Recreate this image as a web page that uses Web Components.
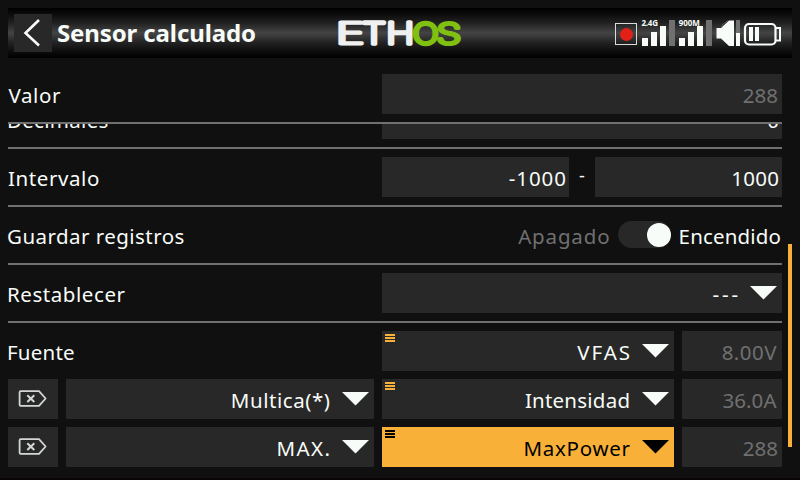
<!DOCTYPE html>
<html lang="es"><head><meta charset="utf-8"><title>Sensor calculado</title>
<style>
html,body{margin:0;background:#101010}
body{width:800px;height:480px;overflow:hidden;font-family:"Noto Sans",sans-serif;font-size:20.5px;color:#f8fcf8}
</style></head><body>
<ethos-screen></ethos-screen>
<script>
const ctx = document.createElement('canvas').getContext('2d');
function define(name, html, after) {
  const t = document.createElement('template');
  t.innerHTML = html;
  customElements.define(name, class extends HTMLElement {
    constructor() { super(); this.attachShadow({mode:'open'}).append(t.content.cloneNode(true)); }
    connectedCallback() { if (after) after(this); }
  });
}

/* Text tracked so that its ink spans the given width */
define('ui-text', `<style>:host{display:block;white-space:pre;line-height:40px;flex:none}</style><slot></slot>`, el => {
  const s = getComputedStyle(el), str = el.textContent;
  ctx.font = `${s.fontWeight} ${s.fontSize} ${s.fontFamily}`;
  const m = ctx.measureText(str), ink = m.actualBoundingBoxRight + m.actualBoundingBoxLeft;
  const ls = str.length > 1 ? (el.getAttribute('w') - ink) / (str.length - 1) : 0;
  el.style.letterSpacing = ls.toFixed(3) + 'px';
  el.style.marginRight = (-ls).toFixed(3) + 'px';
});

define('ui-field', `<style>
:host{display:flex;box-sizing:border-box;height:40px;padding:1px 3px 0 0;background:#282828;justify-content:flex-end;overflow:hidden}
:host([muted]){color:#707070;padding-right:4px}
:host([unit]){padding-right:5.5px}
</style><slot></slot>`);

define('ui-select', `<style>
:host{display:flex;position:relative;box-sizing:border-box;height:40px;padding:0 5px 0 0;background:#282828;justify-content:flex-end;gap:12px;--mark:#f8b038}
:host([active]){background:#f8b038;color:#000;--mark:#000}
.t{padding-top:1px}
.arrow{flex:none;margin-top:13px}
.mark{display:none;position:absolute;left:3px;top:3px}
:host([menu]) .mark{display:block}
</style>
<svg class="mark" width="10" height="8" fill="var(--mark)"><rect width="10" height="2"/><rect y="3" width="10" height="2"/><rect y="6" width="10" height="2"/></svg>
<div class="t"><slot></slot></div>
<svg class="arrow" width="27" height="14" fill="currentColor"><path d="M0 0H27L13.5 13.5Z"/></svg>`);

define('ui-delete', `<style>:host{display:flex;height:40px;background:#282828;align-items:center;justify-content:center}svg{margin:0 2px 1px 0}</style>
<svg width="29" height="17" viewBox="0 0 29 17" fill="none" stroke="#d4d8d4"><path stroke-width="1.8" stroke-linejoin="round" d="M2.7 1.2H21L27.6 8.5L21 15.8H2.7Q1.6 15.8 1.6 14.7V2.3Q1.6 1.2 2.7 1.2Z"/><path stroke-width="2" d="M9.3 5.2L16.3 12M16.3 5.2L9.3 12"/></svg>`);

define('ui-switch', `<style>:host{display:flow-root;width:53px;height:27px;border-radius:14px;background:#282828}
i{display:block;width:24px;height:24px;margin:2px 0 0 29px;border-radius:50%;background:#f8fcf8}</style><i></i>`);

define('ui-row', `<style>
:host{display:grid;grid-template-columns:374px 400px;box-sizing:border-box;height:58px;padding-top:8px;border-bottom:2px solid #707070}
.l{padding-top:1px;margin-left:var(--nudge,-1px)}
.c{display:flex;min-width:0}
</style><div class="l"><slot name="label"></slot></div><div class="c"><slot></slot></div>`);

define('ui-header', `<style>
:host{display:flex;box-sizing:border-box;height:50px;margin:8px 8px 0;padding-left:6px;align-items:center;background:linear-gradient(#000,#060706 8%,#202120 30%,#444 50%,#202120 70%,#060706 92%,#000)}
.back{width:38px;height:38px;background:#282828;flex:none}
.title{width:278px;margin-left:5px;font-size:24px;font-weight:bold;flex:none}
svg{display:block;flex:none}
.status{margin-left:145px}
.logo text{font:200 31px Inter,sans-serif;vector-effect:non-scaling-stroke;stroke-width:4.2px;stroke-linejoin:round}
</style>
<svg class="back" viewBox="14 14 38 38"><path d="M39 20L25.5 33L39 45.5" fill="none" stroke="#f8fcf8" stroke-width="2.6"/></svg>
<div class="title"><ui-text w="197">Sensor calculado</ui-text></div>
<svg class="logo" width="130" height="34" viewBox="335 16 130 34">
<g fill="#f0f0f0" stroke="#f0f0f0"><text data-l="338.5" data-r="363.5">E</text><text data-l="362" data-r="386">T</text><text data-l="388" data-r="412.3">H</text></g>
<g fill="#80c010" stroke="#80c010"><text data-l="413" data-r="438">O</text><text data-l="437.3" data-r="460.8">S</text></g></svg>
<svg class="status" width="175" height="34" viewBox="610 16 175 34" fill="#f8fcf8">
<rect x="615.5" y="23.5" width="21" height="21" fill="none" stroke="#d8dcd8"/><circle cx="626.5" cy="34.5" r="6.5" fill="#e32018"/>
<path d="M642 38h6v8h-6zM651 32h6v14h-6zM660 26h6v20h-6zM679 38h6v8h-6zM688 32h6v14h-6zM697 26h6v20h-6z"/>
<path fill="#707070" d="M669 20h6v26h-6zM706 20h6v26h-6zM736 20h4v13h-4z"/>
<g font-family="Noto Sans" font-weight="bold" font-size="8"><text x="641.5" y="26" textLength="16.5">2.4G</text><text x="678.7" y="26" textLength="21">900M</text></g>
<path d="M716.5 28H721L729 20.5H734V46H729L721 38.5H716.5Z"/><path d="M722 27.5V25L728 20.5" fill="none" stroke="#888" stroke-width=".5"/><rect x="736" y="33" width="4" height="13"/>
<rect x="745" y="24" width="30.5" height="20.5" rx="4" fill="none" stroke="#f8fcf8" stroke-width="2.2"/>
<path d="M776 28H780V40.5H776" fill="none" stroke="#f8fcf8" stroke-width="2"/><path d="M749 27h4v14h-4zM755 27h4v14h-4z"/>
</svg>`, el => {
  /* Stretch each logo letter to its own box, leaving room for the outline */
  const half = 1.8, top = 20.3, bottom = 46.2;
  for (const t of el.shadowRoot.querySelectorAll('.logo text')) {
    ctx.font = '200 310px Inter,sans-serif';
    const m = ctx.measureText(t.textContent), l = -m.actualBoundingBoxLeft / 10, r = m.actualBoundingBoxRight / 10;
    const a = m.actualBoundingBoxAscent / 10, d = m.actualBoundingBoxDescent / 10;
    const sx = (t.dataset.r - t.dataset.l - 2 * half) / (r - l), sy = (bottom - top - 2 * half) / (a + d);
    t.setAttribute('transform', `translate(${+t.dataset.l + half - l * sx} ${bottom - half - d * sy}) scale(${sx} ${sy})`);
  }
});

define('ethos-screen', `<style>
:host{display:flex;flex-direction:column;height:480px;background:linear-gradient(#101010 478px,#080408 478px)}
.pinned{padding:8px 18px 0 8px}
.body{display:flex;height:356px;overflow:hidden;padding-left:8px}
.rows{width:774px;margin-top:-33px}
.bar{width:4px;height:203px;margin:120px 0 0 6px;background:#f8b038}
.grow{flex:1;min-width:0}
.dash{width:26px;line-height:36px;text-align:center;font-size:18px}
.sw{flex:1;display:flex;justify-content:flex-end;padding-right:1px}
.sw ui-switch{margin:6px 8px 0 8px}
.sw ui-text{padding-top:1px}
.off{color:#707070}
.src{display:grid;grid-template-columns:50px 308px 292px 100px;grid-auto-rows:40px;gap:8px;padding-top:8px}
.src .name{grid-column:1/3;padding-top:1px;margin-left:-1px}
</style>
<ui-header></ui-header>
<div class="pinned"><ui-row style="--nudge:.5px"><ui-text slot="label" w="52.5">Valor</ui-text><ui-field class="grow" muted><ui-text w="34.5">288</ui-text></ui-field></ui-row></div>
<div class="body"><div class="rows">
<ui-row><ui-text slot="label" w="99.5">Decimales</ui-text><ui-field class="grow"><ui-text>0</ui-text></ui-field></ui-row>
<ui-row style="--nudge:0"><ui-text slot="label" w="91">Intervalo</ui-text><ui-field class="grow"><ui-text w="56.5">-1000</ui-text></ui-field><span class="dash">-</span><ui-field class="grow"><ui-text w="46">1000</ui-text></ui-field></ui-row>
<ui-row><ui-text slot="label" w="175.5">Guardar registros</ui-text><div class="sw"><ui-text class="off" w="91">Apagado</ui-text><ui-switch></ui-switch><ui-text w="101">Encendido</ui-text></div></ui-row>
<ui-row><ui-text slot="label" w="117.5">Restablecer</ui-text><ui-select class="grow"><ui-text w="25">---</ui-text></ui-select></ui-row>
<div class="src">
<div class="name"><ui-text w="66">Fuente</ui-text></div><ui-select menu><ui-text w="52.5">VFAS</ui-text></ui-select><ui-field muted unit><ui-text w="54.5">8.00V</ui-text></ui-field>
<ui-delete></ui-delete><ui-select><ui-text w="98">Multica(*)</ui-text></ui-select><ui-select menu><ui-text w="103.5">Intensidad</ui-text></ui-select><ui-field muted unit><ui-text w="55">36.0A</ui-text></ui-field>
<ui-delete></ui-delete><ui-select><ui-text w="52">MAX.</ui-text></ui-select><ui-select menu active><ui-text w="106">MaxPower</ui-text></ui-select><ui-field muted><ui-text w="34.5">288</ui-text></ui-field>
</div></div><div class="bar"></div></div>`);
</script></body></html>
